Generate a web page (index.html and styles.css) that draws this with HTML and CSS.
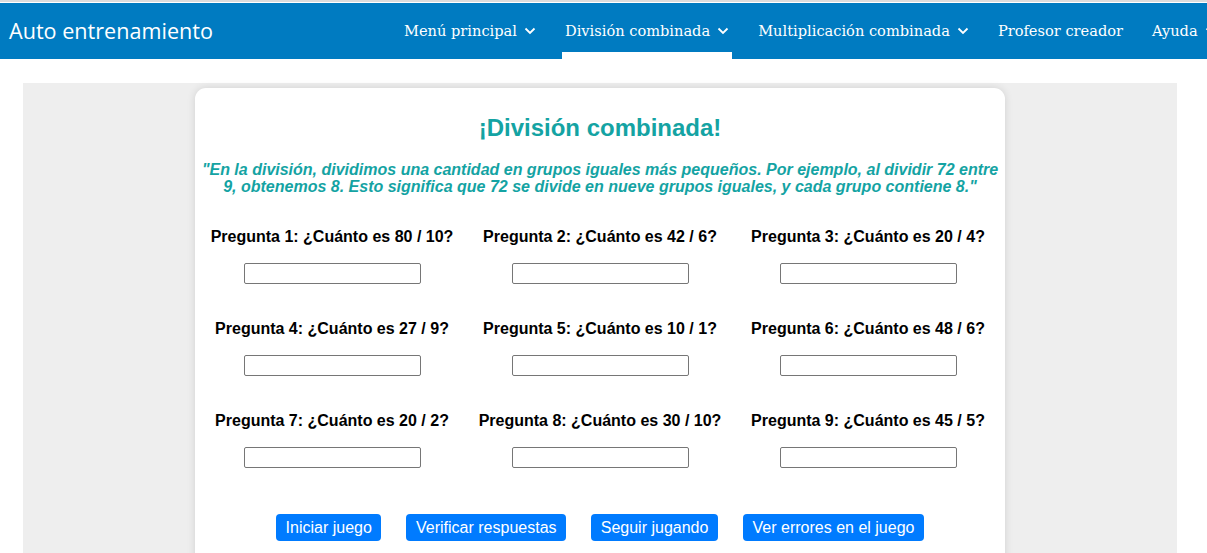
FILE: index.html
```html
<!DOCTYPE html>
<html lang="es">
<head>
<meta charset="utf-8">
<title>División combinada</title>
<link rel="stylesheet" href="styles.css">
</head>
<body>
<header class="topbar">
  <div class="brand">Auto entrenamiento</div>
  <nav class="nav">
    <a class="nav-item">Menú principal <svg class="chev" viewBox="0 0 12 8"><path d="M1.5 1.5 6 6l4.5-4.5"/></svg></a>
    <a class="nav-item active">División combinada <svg class="chev" viewBox="0 0 12 8"><path d="M1.5 1.5 6 6l4.5-4.5"/></svg></a>
    <a class="nav-item">Multiplicación combinada <svg class="chev" viewBox="0 0 12 8"><path d="M1.5 1.5 6 6l4.5-4.5"/></svg></a>
    <a class="nav-item">Profesor creador</a>
    <a class="nav-item">Ayuda <svg class="chev" viewBox="0 0 12 8"><path d="M1.5 1.5 6 6l4.5-4.5"/></svg></a>
  </nav>
</header>
<main class="stage">
  <section class="card">
    <h1 class="title">¡División combinada!</h1>
    <p class="quote">"En la división, dividimos una cantidad en grupos iguales más pequeños. Por ejemplo, al dividir 72 entre 9, obtenemos 8. Esto significa que 72 se divide en nueve grupos iguales, y cada grupo contiene 8."</p>
    <div class="grid">
      <div class="q"><label>Pregunta 1: ¿Cuánto es 80 / 10?</label><input type="text"></div>
      <div class="q"><label>Pregunta 2: ¿Cuánto es 42 / 6?</label><input type="text"></div>
      <div class="q"><label>Pregunta 3: ¿Cuánto es 20 / 4?</label><input type="text"></div>
      <div class="q"><label>Pregunta 4: ¿Cuánto es 27 / 9?</label><input type="text"></div>
      <div class="q"><label>Pregunta 5: ¿Cuánto es 10 / 1?</label><input type="text"></div>
      <div class="q"><label>Pregunta 6: ¿Cuánto es 48 / 6?</label><input type="text"></div>
      <div class="q"><label>Pregunta 7: ¿Cuánto es 20 / 2?</label><input type="text"></div>
      <div class="q"><label>Pregunta 8: ¿Cuánto es 30 / 10?</label><input type="text"></div>
      <div class="q"><label>Pregunta 9: ¿Cuánto es 45 / 5?</label><input type="text"></div>
    </div>
    <div class="actions">
      <button class="btn">Iniciar juego</button>
      <button class="btn">Verificar respuestas</button>
      <button class="btn">Seguir jugando</button>
      <button class="btn">Ver errores en el juego</button>
    </div>
  </section>
</main>
</body>
</html>
```
FILE: styles.css
```css
html, body {
  margin: 0;
  padding: 0;
  background: #ffffff;
  overflow: hidden;
}
body {
  border-top: 2px solid #dcdcdc;
  padding-top: 1px;
  font-family: "Liberation Sans", Arial, sans-serif;
}
.topbar {
  height: 56px;
  background: #007bc1;
  display: flex;
  align-items: stretch;
  white-space: nowrap;
}
.brand {
  font-family: "Open Sans", sans-serif;
  font-size: 21.6px;
  color: #ffffff;
  padding-left: 9px;
  display: flex;
  align-items: center;
  width: 380px;
  flex: none;
  padding-bottom: 2px;
}
.nav {
  display: flex;
  gap: 23px;
  margin-left: 12px;
}
.nav-item {
  position: relative;
  display: flex;
  align-items: center;
  gap: 7px;
  padding: 0 3px 2px;
  font-family: "DejaVu Serif", serif;
  font-size: 14.6px;
  color: #ffffff;
}
.nav-item.active::after {
  content: "";
  position: absolute;
  left: 0;
  right: 0;
  bottom: 0;
  height: 7px;
  background: #ffffff;
}
.chev {
  width: 12px;
  height: 8px;
  fill: none;
  stroke: #ffffff;
  stroke-width: 1.8;
  margin-top: 2px;
}
.stage {
  margin: 24px 30px 0 23px;
  background: #eeeeee;
  padding-top: 5px;
  height: 600px;
}
.card {
  width: 810px;
  margin: 0 auto;
  box-sizing: border-box;
  background: #ffffff;
  border-radius: 11px;
  box-shadow: 0 0 8px rgba(0, 0, 0, 0.12);
  padding: 26px 3px 40px;
  text-align: center;
}
.title {
  margin: 0;
  font-size: 24px;
  line-height: 28px;
  font-weight: bold;
  color: #14a3a3;
}
.quote {
  margin: 19px 0 0;
  font-size: 16px;
  line-height: 17px;
  font-weight: bold;
  font-style: italic;
  color: #14a3a3;
}
.grid {
  display: grid;
  grid-template-columns: repeat(3, 1fr);
  row-gap: 36px;
  margin-top: 33px;
}
.q {
  display: flex;
  flex-direction: column;
  align-items: center;
  gap: 17px;
}
.q label {
  font-size: 16px;
  line-height: 18px;
  font-weight: bold;
  color: #000000;
  white-space: nowrap;
}
.q input {
  width: 177px;
  height: 21px;
  box-sizing: border-box;
  border: 1px solid #767676;
  border-radius: 2px;
  margin: 0;
  padding: 1px 2px;
}
.actions {
  display: flex;
  justify-content: center;
  gap: 25px;
  margin-top: 46px;
}
.btn {
  height: 27px;
  padding: 0 9.6px;
  border: none;
  border-radius: 4px;
  background: #007bff;
  color: #ffffff;
  font-family: "Liberation Sans", Arial, sans-serif;
  font-size: 16px;
}
```
